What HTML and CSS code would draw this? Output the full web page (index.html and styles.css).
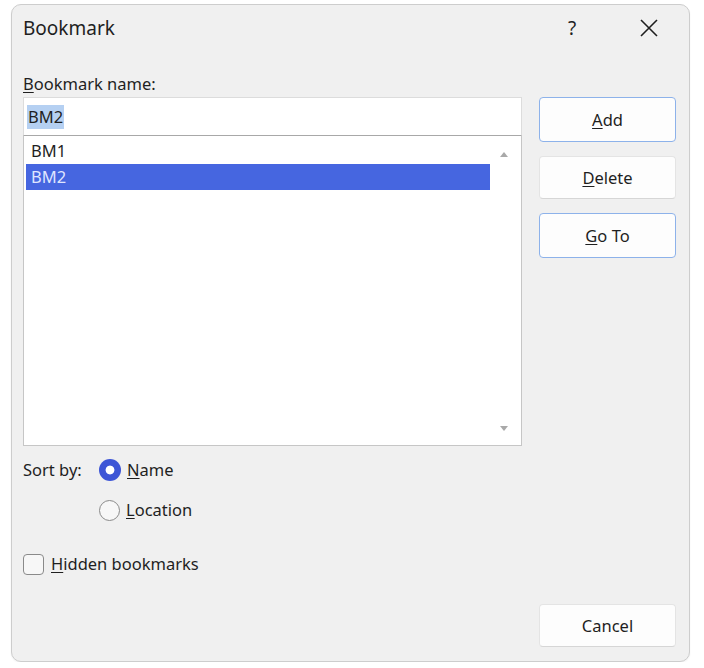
FILE: index.html
```html
<!DOCTYPE html>
<html>
<head>
  <title>Bookmark</title>
  <link rel="stylesheet" href="styles.css">
</head>
<body>
  <div class="dialog">
    <div class="titlebar">
      <span class="title">Bookmark</span>
      <span class="help">?</span>
      <span class="close">
        <svg width="18" height="18" viewBox="0 0 18 18">
          <path d="M1 1 L17 17 M17 1 L1 17" stroke="#1e1e1e" stroke-width="1.6" fill="none"/>
        </svg>
      </span>
    </div>

    <div class="content">
      <div class="main-col">
        <label class="name-label" for="bookmarkName"><u>B</u>ookmark name:</label>
        <div class="name-field">
          <span class="selected-text">BM2</span>
        </div>
        <div class="list-box">
          <div class="list-items">
            <div class="list-item">BM1</div>
            <div class="list-item active">BM2</div>
          </div>
          <div class="scroll-track">
            <span class="arrow up"></span>
            <span class="arrow down"></span>
          </div>
        </div>

        <div class="sort-group">
          <span class="sort-label">Sort by:</span>
          <div class="radios">
            <div class="radio-row">
              <span class="radio checked"></span>
              <span><u>N</u>ame</span>
            </div>
            <div class="radio-row">
              <span class="radio"></span>
              <span><u>L</u>ocation</span>
            </div>
          </div>
        </div>

        <div class="check-row">
          <span class="checkbox"></span>
          <span><u>H</u>idden bookmarks</span>
        </div>
      </div>

      <div class="side-col">
        <div class="btn primary"><u>A</u>dd</div>
        <div class="btn"><u>D</u>elete</div>
        <div class="btn primary"><u>G</u>o To</div>
        <div class="btn cancel">Cancel</div>
      </div>
    </div>
  </div>
</body>
</html>
```

FILE: styles.css
```css
body {
  margin: 0;
  background: #FFFFFF;
  font-family: 'Noto Sans', 'Open Sans', sans-serif;
  color: #1f1f1f;
}

u {
  text-decoration-thickness: 1px;
  text-underline-offset: 2px;
}

.dialog {
  margin: 4px 0 0 11px;
  width: 679px;
  height: 658px;
  box-sizing: border-box;
  border: 1px solid #cdcdcd;
  border-radius: 10px;
  background: #F0F0F0;
  box-shadow: 0 1px 2px rgba(0, 0, 0, 0.06);
  display: flex;
  flex-direction: column;
}

/* Title bar */
.titlebar {
  height: 46px;
  display: flex;
  align-items: center;
  padding-left: 11px;
}

.title {
  font-size: 19px;
  flex: 1;
}

.help {
  font-size: 19px;
  width: 20px;
  text-align: center;
  margin-right: 58px;
}

.close {
  display: flex;
  margin-right: 31px;
}

/* Body */
.content {
  flex: 1;
  display: flex;
  gap: 17px;
  padding: 21px 12px 14px 11px;
}

.main-col {
  width: 499px;
  display: flex;
  flex-direction: column;
}

.name-label {
  font-size: 16.5px;
  line-height: 24px;
  margin-bottom: 1px;
}

.name-field {
  height: 37px;
  background: #FFFFFF;
  border: 1px solid #dcdcdc;
  border-bottom: 1px solid #a8a8a8;
  display: flex;
  align-items: center;
  padding-left: 3px;
  font-size: 16.5px;
}

.selected-text {
  background: #b5d0f2;
  padding: 2px 1px;
  line-height: 20px;
}

.list-box {
  height: 310px;
  background: #FFFFFF;
  border: 1px solid #c6c6c6;
  border-top: none;
  display: flex;
  padding: 2px 0 0 2px;
  box-sizing: border-box;
}

.list-items {
  flex: 1;
}

.list-item {
  height: 26px;
  line-height: 26px;
  padding-left: 5px;
  font-size: 16.5px;
}

.list-item.active {
  background: #4666e0;
  color: #dfe5ff;
}

.scroll-track {
  width: 31px;
  position: relative;
}

.arrow {
  position: absolute;
  left: 10px;
  width: 0;
  height: 0;
  border-left: 4px solid transparent;
  border-right: 4px solid transparent;
}

.arrow.up {
  top: 14px;
  border-bottom: 5px solid #a9a9a9;
}

.arrow.down {
  bottom: 14px;
  border-top: 5px solid #a9a9a9;
}

/* Sort options */
.sort-group {
  display: flex;
  margin-top: 12px;
  font-size: 16.5px;
}

.sort-label {
  width: 76px;
  line-height: 24px;
}

.radios {
  display: flex;
  flex-direction: column;
  gap: 16px;
}

.radio-row,
.check-row {
  display: flex;
  align-items: center;
  gap: 6px;
  line-height: 24px;
}

.radio {
  width: 19px;
  height: 19px;
  border-radius: 50%;
  border: 1.5px solid #8a8a8a;
  background: #f7f7f7;
}

.radio.checked {
  width: 22px;
  height: 22px;
  border: none;
  background: radial-gradient(circle, #FFFFFF 0 4px, #3d55d6 4.8px);
}

.check-row {
  margin-top: 30px;
  font-size: 16.5px;
  gap: 7px;
}

.checkbox {
  width: 19px;
  height: 19px;
  border: 1.5px solid #8a8a8a;
  border-radius: 4px;
  background: #f7f7f7;
}

/* Buttons */
.side-col {
  width: 137px;
  padding-top: 25px;
  display: flex;
  flex-direction: column;
  gap: 14px;
}

.btn {
  height: 43px;
  box-sizing: border-box;
  display: flex;
  align-items: center;
  justify-content: center;
  background: #FDFDFD;
  border: 1px solid #e4e4e4;
  border-bottom-color: #d6d6d6;
  border-radius: 4px;
  font-size: 16.5px;
}

.btn.primary {
  border: 1.5px solid #8db2ea;
  height: 45px;
}

.btn.cancel {
  margin-top: auto;
}
```
